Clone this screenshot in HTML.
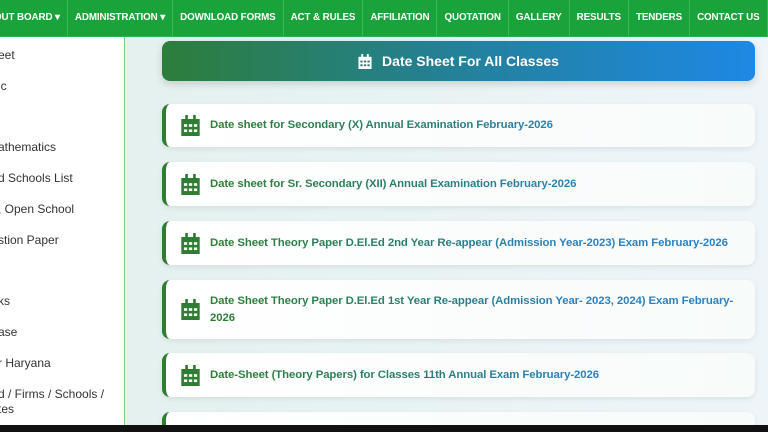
<!DOCTYPE html>
<html><head><meta charset="utf-8"><style>
*{margin:0;padding:0;box-sizing:border-box}
html,body{width:768px;height:432px;overflow:hidden}
body{position:relative;font-family:"Liberation Sans",sans-serif;background:#eaf3f2}
.nav{position:absolute;left:0;top:0;width:768px;height:37px;background:#1aa33b;display:flex;border-bottom:1px solid #2bb24a;overflow:hidden}
.nav div{color:#fff;font-weight:bold;font-size:9.8px;letter-spacing:-0.1px;line-height:36px;padding:0 7px;border-right:1px solid #3cb856;white-space:nowrap}
.nav div:first-child{margin-left:-6px;padding-left:0}
.side{position:absolute;left:0;top:37px;width:125px;height:388px;background:#fff;border-right:1px solid #7cc98b;overflow:hidden}
.side p{position:absolute;font-size:12px;color:#333;white-space:nowrap}
.main{position:absolute;left:125px;top:37px;width:643px;height:388px;background:linear-gradient(90deg,#e4f1ef,#eef5f9)}
.hdr{position:absolute;left:162px;top:41px;width:593px;height:40px;border-radius:8px;background:linear-gradient(90deg,#2d7d3a,#23819a 50%,#1e88e5);box-shadow:0 3px 8px rgba(0,0,0,.15);color:#fff;font-weight:bold;font-size:14px;display:flex;align-items:center;justify-content:center}
.card{position:absolute;left:162px;width:593px;background:linear-gradient(90deg,#fff,#f7fbfa);border-radius:8px;border-left:4px solid #2e7d32;box-shadow:0 2px 6px rgba(0,0,0,.08);display:flex;align-items:center}
.card svg{position:absolute;left:15px}
.card span{position:absolute;left:44px;right:14px;font-weight:bold;font-size:11.4px;letter-spacing:-0.1px;line-height:17px;background:linear-gradient(90deg,#2e7d32 0,#2b7e72 40%,#2a80c0 70%);-webkit-background-clip:text;background-clip:text;color:transparent}
.bot{position:absolute;left:0;top:425px;width:768px;height:7px;background:#111}
</style></head><body>
<div class="nav"><div>OUT BOARD ▾</div><div>ADMINISTRATION ▾</div><div>DOWNLOAD FORMS</div><div>ACT &amp; RULES</div><div>AFFILIATION</div><div>QUOTATION</div><div>GALLERY</div><div>RESULTS</div><div>TENDERS</div><div>CONTACT US</div></div>
<div class="side">
<p style="left:-2px;top:11px">eet</p>
<p style="left:-2px;top:42px">ic</p>
<p style="left:-2px;top:103px">athematics</p>
<p style="left:-2px;top:134px">d Schools List</p>
<p style="left:-2px;top:165px">, Open School</p>
<p style="left:-2px;top:196px">stion Paper</p>
<p style="left:-2px;top:257px">ks</p>
<p style="left:-2px;top:288px">ase</p>
<p style="left:-2px;top:319px">r Haryana</p>
<p style="left:-2px;top:350px">d / Firms / Schools /</p>
<p style="left:-2px;top:365px">tes</p>
</div>
<div class="main"></div>
<div class="hdr"><svg width="14" height="15" viewBox="0 0 14 16" style="margin-right:10px"><rect x="3" y="0" width="2" height="4" fill="#fff"/><rect x="9" y="0" width="2" height="4" fill="#fff"/><path d="M0 3h14v13H0z" fill="#fff"/><g fill="#2a7f7a"><rect x="2" y="7" width="2.5" height="2"/><rect x="5.8" y="7" width="2.5" height="2"/><rect x="9.6" y="7" width="2.5" height="2"/><rect x="2" y="11" width="2.5" height="2"/><rect x="5.8" y="11" width="2.5" height="2"/><rect x="9.6" y="11" width="2.5" height="2"/></g></svg>Date Sheet For All Classes</div>

<div class="card" style="top:104px;height:43px"><svg width="19" height="21" viewBox="0 0 14 16"><rect x="3" y="0" width="2" height="4" fill="#2e7d32"/><rect x="9" y="0" width="2" height="4" fill="#2e7d32"/><path d="M0 3h14v13H0z" fill="#2e7d32"/><g fill="#fff"><rect x="2" y="7" width="2.5" height="2"/><rect x="5.8" y="7" width="2.5" height="2"/><rect x="9.6" y="7" width="2.5" height="2"/><rect x="2" y="11" width="2.5" height="2"/><rect x="5.8" y="11" width="2.5" height="2"/><rect x="9.6" y="11" width="2.5" height="2"/></g></svg><span>Date sheet for Secondary (X) Annual Examination February-2026</span></div>
<div class="card" style="top:162px;height:44px"><svg width="19" height="21" viewBox="0 0 14 16"><rect x="3" y="0" width="2" height="4" fill="#2e7d32"/><rect x="9" y="0" width="2" height="4" fill="#2e7d32"/><path d="M0 3h14v13H0z" fill="#2e7d32"/><g fill="#fff"><rect x="2" y="7" width="2.5" height="2"/><rect x="5.8" y="7" width="2.5" height="2"/><rect x="9.6" y="7" width="2.5" height="2"/><rect x="2" y="11" width="2.5" height="2"/><rect x="5.8" y="11" width="2.5" height="2"/><rect x="9.6" y="11" width="2.5" height="2"/></g></svg><span>Date sheet for Sr. Secondary (XII) Annual Examination February-2026</span></div>
<div class="card" style="top:221px;height:44px"><svg width="19" height="21" viewBox="0 0 14 16"><rect x="3" y="0" width="2" height="4" fill="#2e7d32"/><rect x="9" y="0" width="2" height="4" fill="#2e7d32"/><path d="M0 3h14v13H0z" fill="#2e7d32"/><g fill="#fff"><rect x="2" y="7" width="2.5" height="2"/><rect x="5.8" y="7" width="2.5" height="2"/><rect x="9.6" y="7" width="2.5" height="2"/><rect x="2" y="11" width="2.5" height="2"/><rect x="5.8" y="11" width="2.5" height="2"/><rect x="9.6" y="11" width="2.5" height="2"/></g></svg><span style="white-space:nowrap;right:auto">Date Sheet Theory Paper D.El.Ed 2nd Year Re-appear (Admission Year-2023) Exam February-2026</span></div>
<div class="card" style="top:280px;height:59px"><svg width="19" height="21" viewBox="0 0 14 16"><rect x="3" y="0" width="2" height="4" fill="#2e7d32"/><rect x="9" y="0" width="2" height="4" fill="#2e7d32"/><path d="M0 3h14v13H0z" fill="#2e7d32"/><g fill="#fff"><rect x="2" y="7" width="2.5" height="2"/><rect x="5.8" y="7" width="2.5" height="2"/><rect x="9.6" y="7" width="2.5" height="2"/><rect x="2" y="11" width="2.5" height="2"/><rect x="5.8" y="11" width="2.5" height="2"/><rect x="9.6" y="11" width="2.5" height="2"/></g></svg><span style="white-space:nowrap;right:auto">Date Sheet Theory Paper D.El.Ed 1st Year Re-appear (Admission Year- 2023, 2024) Exam February-<br>2026</span></div>
<div class="card" style="top:353px;height:44px"><svg width="19" height="21" viewBox="0 0 14 16"><rect x="3" y="0" width="2" height="4" fill="#2e7d32"/><rect x="9" y="0" width="2" height="4" fill="#2e7d32"/><path d="M0 3h14v13H0z" fill="#2e7d32"/><g fill="#fff"><rect x="2" y="7" width="2.5" height="2"/><rect x="5.8" y="7" width="2.5" height="2"/><rect x="9.6" y="7" width="2.5" height="2"/><rect x="2" y="11" width="2.5" height="2"/><rect x="5.8" y="11" width="2.5" height="2"/><rect x="9.6" y="11" width="2.5" height="2"/></g></svg><span>Date-Sheet (Theory Papers) for Classes 11th Annual Exam February-2026</span></div>
<div class="card" style="top:412px;height:13px;border-bottom-left-radius:0;border-bottom-right-radius:0"></div>
<div class="bot"></div>
</body></html>
